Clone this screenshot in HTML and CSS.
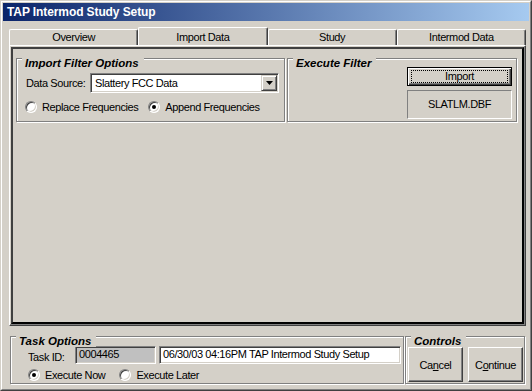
FILE: index.html
```html
<!DOCTYPE html>
<html lang="en">
<head>
  <meta charset="UTF-8" />
  <title>TAP Intermod Study Setup</title>
  <link rel="stylesheet" href="styles.css">
</head>
<body>
  <div class="window">
    <div class="frame">
      <div class="titlebar">TAP Intermod Study Setup</div>

      <div class="client">
        <div class="tabs">
          <div class="tab">Overview</div>
          <div class="tab active">Import Data</div>
          <div class="tab">Study</div>
          <div class="tab">Intermod Data</div>
        </div>

        <div class="tabpage">
          <div class="page-inner">
            <!-- import filter options -->
            <div class="group filter-group">
              <span class="group-title">Import Filter Options</span>
              <div class="field-row">
                <span class="field-label">Data Source:</span>
                <div class="combo">
                  <span class="combo-text">Slattery FCC Data</span>
                  <span class="combo-btn">
                    <svg width="7" height="4" viewBox="0 0 7 4"><polygon points="0,0 7,0 3.5,4" fill="#000"/></svg>
                  </span>
                </div>
              </div>
              <div class="radio-row">
                <span class="radio-item"><span class="radio"></span>Replace Frequencies</span>
                <span class="radio-item"><span class="radio checked"></span>Append Frequencies</span>
              </div>
            </div>

            <!-- execute filter -->
            <div class="group exec-group">
              <span class="group-title">Execute Filter</span>
              <button class="btn default import-btn"><span class="focus">Import</span></button>
              <div class="file-box">SLATLM.DBF</div>
            </div>
          </div>
        </div>

        <div class="bottom-row">
          <div class="group task-group">
            <span class="group-title">Task Options</span>
            <div class="task-row">
              <span class="task-label">Task ID:</span>
              <div class="textbox readonly">0004465</div>
              <div class="textbox">06/30/03 04:16PM TAP Intermod Study Setup</div>
            </div>
            <div class="radio-row exec-row">
              <span class="radio-item"><span class="radio checked"></span>Execute Now</span>
              <span class="radio-item"><span class="radio"></span>Execute Later</span>
            </div>
          </div>

          <div class="group controls-group">
            <span class="group-title">Controls</span>
            <button class="btn big-btn">Ca<u>n</u>cel</button>
            <button class="btn big-btn">C<u>o</u>ntinue</button>
          </div>
        </div>
      </div>
    </div>
  </div>
</body>
</html>
```

FILE: styles.css
```css
* { box-sizing: border-box; }
body { margin: 0; font-family: "Liberation Sans", Arial, sans-serif; font-size: 11px; letter-spacing: -0.4px; color: #000; background: #d4d0c8; }

/* window frame */
.window { width: 532px; height: 391px; background: #d4d0c8; border: 1px solid; border-color: #d4d0c8 #404040 #404040 #d4d0c8; }
.frame { height: 100%; border: 1px solid; border-color: #fff #808080 #808080 #fff; padding: 1px; display: flex; flex-direction: column; }
.titlebar {
  height: 18px;
  background: linear-gradient(to right, #0a246a, #a6caf0);
  color: #fff;
  font-weight: bold;
  font-size: 12px;
  letter-spacing: -0.1px;
  line-height: 18px;
  padding-left: 4px;
}
.client { flex: 1; display: flex; flex-direction: column; padding: 6px 3px 4px 6px; }

/* tabs */
.tabs { display: flex; height: 18px; align-items: flex-end; }
.tab {
  flex: 1;
  height: 16px;
  border: 1px solid;
  border-bottom: none;
  border-color: #fff #404040 transparent #fff;
  box-shadow: inset -1px 0 #808080;
  border-radius: 2px 2px 0 0;
  text-align: center;
  line-height: 14px;
}
.tab.active { height: 18px; padding-top: 2px; }

.tabpage { height: 281px; border: 1px solid; border-color: #fff #404040 #404040 #fff; box-shadow: inset -1px -1px #808080; padding: 1px; }
.page-inner {
  height: 100%;
  border: 2px solid;
  border-color: #404040 #000 #000 #404040;
  padding: 9px 5px 0 3px;
  display: flex;
  gap: 2px;
  align-items: flex-start;
}

/* group boxes */
.group { position: relative; border: 1px solid #808080; box-shadow: inset 1px 1px #fff, 1px 1px #fff; }
.group-title {
  position: absolute;
  top: -1px;
  left: 5px;
  padding: 0 5px 0 3px;
  background: #d4d0c8;
  font-weight: bold;
  font-style: italic;
  font-size: 11.5px;
  letter-spacing: 0;
  line-height: 11px;
}

.filter-group { width: 269px; height: 64px; padding: 14px 0 0 9px; }
.field-row { display: grid; grid-template-columns: 64px 189px; align-items: center; height: 20px; }
.combo {
  display: flex;
  height: 20px;
  background: #fff;
  border: 1px solid;
  border-color: #808080 #fff #fff #808080;
  box-shadow: inset 1px 1px #404040, inset -1px -1px #d4d0c8;
  padding: 1px;
}
.combo-text { flex: 1; padding-left: 3px; line-height: 16px; }
.combo-btn {
  width: 16px;
  height: 16px;
  background: #d4d0c8;
  border: 1px solid;
  border-color: #d4d0c8 #404040 #404040 #d4d0c8;
  box-shadow: inset 1px 1px #fff, inset -1px -1px #808080;
  display: flex;
  align-items: center;
  justify-content: center;
}

.radio-row { display: flex; align-items: center; gap: 10px; height: 13px; margin: 7px 0 0 -1px; }
.radio-item { display: flex; align-items: center; gap: 5px; }
.radio {
  width: 12px;
  height: 12px;
  border-radius: 50%;
  background: #fff;
  border: 1px solid;
  border-color: #808080 #fff #fff #808080;
  box-shadow: inset 1px 1px #404040, inset -1px -1px #d4d0c8;
  display: flex;
  align-items: center;
  justify-content: center;
}
.radio.checked::after { content: ""; width: 4px; height: 4px; border-radius: 50%; background: #000; }

.exec-group { width: 230px; height: 64px; display: flex; flex-direction: column; align-items: flex-end; padding: 8px 4px 0 0; }

/* buttons */
.btn {
  font: inherit;
  letter-spacing: inherit;
  color: #000;
  background: #d4d0c8;
  border: 1px solid;
  border-color: #fff #404040 #404040 #fff;
  box-shadow: inset -1px -1px #808080;
  padding: 0;
  margin: 0;
}
.btn.default { border: 1px solid #000; box-shadow: inset 1px 1px #fff, inset -1px -1px #404040, inset -2px -2px #808080; }
.import-btn { width: 105px; height: 19px; display: flex; padding: 2px 3px; }
.focus { flex: 1; border: 1px dotted #000; line-height: 11px; text-align: center; }
.file-box { width: 105px; height: 29px; margin-top: 4px; border: 1px solid; border-color: #808080 #fff #fff #808080; text-align: center; line-height: 27px; }

/* bottom area */
.bottom-row { display: flex; gap: 1px; margin: 10px 1px 0; height: 48px; }
.task-group { width: 394px; padding: 9px 0 0 17px; }
.task-row { display: grid; grid-template-columns: 44px 81px 242px; column-gap: 3px; height: 18px; }
.task-label { align-self: end; line-height: 13px; margin-right: -3px; }
.textbox {
  height: 18px;
  background: #fff;
  border: 1px solid;
  border-color: #808080 #fff #fff #808080;
  box-shadow: inset 1px 1px #404040, inset -1px -1px #d4d0c8;
  padding-left: 3px;
  line-height: 15px;
}
.textbox.readonly { background: #c0c0c0; }
.exec-row { margin: 4px 0 0 0; gap: 14px; }

.controls-group { width: 120px; display: flex; gap: 5px; padding: 10px 0 0 2px; }
.big-btn { width: 55px; height: 35px; }
```
